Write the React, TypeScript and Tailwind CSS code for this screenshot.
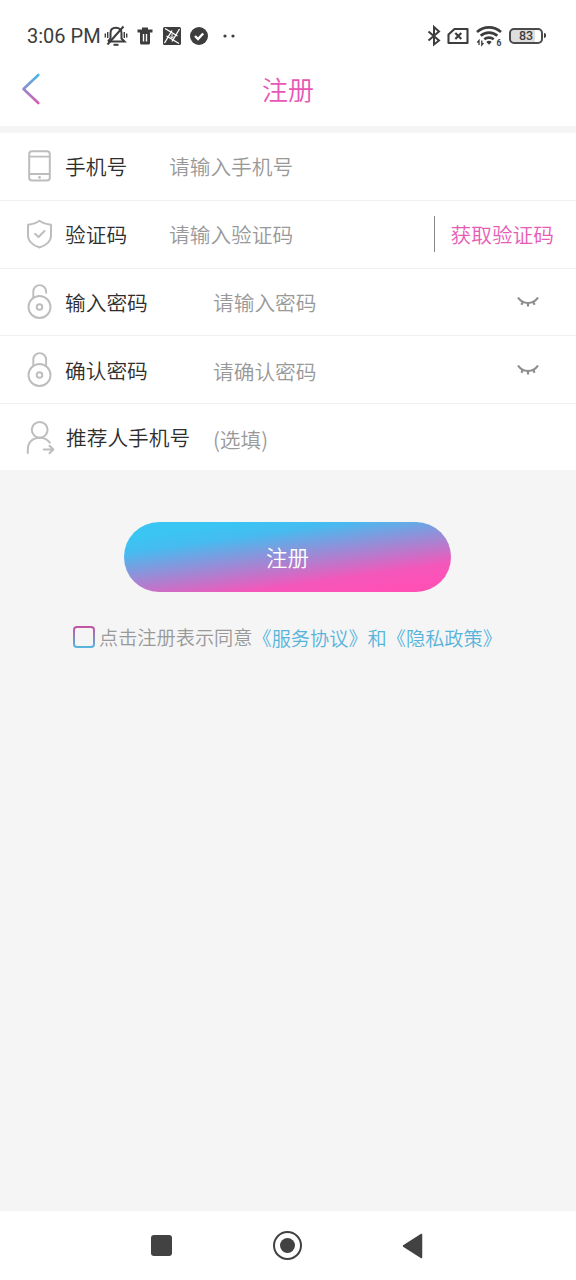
import type { ReactNode } from 'react';

interface FieldRowProps {
  icon: ReactNode;
  label: string;
  placeholder: string;
  className?: string;
  labelClassName?: string;
  placeholderClassName?: string;
  children?: ReactNode;
}

const iconProps = {
  width: 30,
  height: 40,
  viewBox: '0 0 30 40',
  fill: 'none',
  stroke: '#bdbdbd',
  strokeWidth: 2,
  strokeLinecap: 'round' as const,
  strokeLinejoin: 'round' as const,
};

function PhoneIcon() {
  return (
    <svg {...iconProps}>
      <rect x="4.2" y="5.2" width="20.6" height="29.4" rx="2.8" />
      <path d="M4.5 10.700h20M4.500 28h20" strokeWidth="1.8" />
      <circle cx="14.500" cy="31.400" r="1.400" fill="#bdbdbd" stroke="none" />
    </svg>
  );
}

function ShieldIcon() {
  return (
    <svg {...iconProps} strokeWidth="2">
      <path d="M14.500 6.800C11.500 9 7.500 10.300 3 10.800V21.500C3 27 8 31.500 14.500 33.500C21 31.500 26 27 26 21.500V10.800C21.500 10.300 17.500 9 14.500 6.800Z" />
      <path d="M10 19.800l3.500 3.200 6-6" />
    </svg>
  );
}

function LockIcon({ open = false }: { open?: boolean }) {
  return (
    <svg {...iconProps} strokeWidth="1.9">
      <circle cx="14.500" cy="25" r="11" />
      <circle cx="14.500" cy="25" r="2.800" />
      <path d={open ? 'M8.300 15.500V9.500a6.400 6.400 0 0 1 12.800 0v1.200' : 'M8.300 15.500V9.500a6.400 6.400 0 0 1 12.800 0v6'} />
    </svg>
  );
}

function ReferrerIcon() {
  return (
    <svg {...iconProps} strokeWidth="2" overflow="visible">
      <circle cx="14.700" cy="12.800" r="7.900" />
      <path d="M2.800 36V32.500C2.800 25.500 7.500 20.800 14.500 20.800c4.500 0 8 1.800 10.300 4.800" />
      <path d="M18.800 32.500h9.400M24.500 28.700l3.900 3.800-3.900 3.800" />
    </svg>
  );
}

function ClosedEyeIcon() {
  return (
    <svg width="24" height="14" viewBox="0 0 24 14" fill="none" stroke="#8c8c8c" strokeWidth="2.200">
      <path d="M2 2.500C7 9.800 17 9.800 22 2.500" />
      <path d="M12 8v3.500M6.900 6.800L5.400 9.800M17.100 6.800L18.600 9.800" />
    </svg>
  );
}

function FieldRow({
  icon,
  label,
  placeholder,
  className = '',
  labelClassName = 'w-[104px]',
  placeholderClassName = '',
  children,
}: FieldRowProps) {
  return (
    <div className={`flex items-center bg-white pl-[25px] text-[20.700px] leading-[30px] ${className}`}>
      <div className="w-[40px] shrink-0">{icon}</div>
      <label className={`shrink-0 whitespace-nowrap text-[#2e2e2e] ${labelClassName}`}>{label}</label>
      <span className={`flex-1 whitespace-nowrap text-[#999] ${placeholderClassName}`}>{placeholder}</span>
      {children}
    </div>
  );
}

function StatusBar() {
  return (
    <div className="flex h-[54px] items-center justify-between pt-[17px] pr-[30px] pl-[27px] font-normal text-[#3d3d3d]">
      <div className="flex items-center">
        <span className="w-[76px] whitespace-nowrap font-['Roboto'] text-[20px] leading-6">3:06 PM</span>
        {/* muted bell */}
        <svg width="26" height="24" viewBox="0 0 26 24" fill="none" stroke="currentColor" strokeWidth="2">
          <path d="M5 17.500h16.500l-3-3V9C18.500 6 16.500 3.800 13 3.800S7.500 6 7.500 9v5.500L5 17.500" />
          <path d="M10.500 20.800h5" />
          <path d="M4.500 20.500L20.500 2.500" />
          <path d="M2.300 9.500v4M4.700 8v6M21.300 8v6M23.700 9.500v4" strokeWidth="1.400" />
        </svg>
        <svg className="ml-[7px]" width="18" height="20" viewBox="0 0 18 20" fill="currentColor">
          <path fillRule="evenodd" d="M6 1.500h6v2h4.500v3H14V17a1.500 1.500 0 0 1-1.500 1.500h-7A1.500 1.500 0 0 1 4 17V6.500H1.500v-3H6zM6.800 8v7.500h1.400V8zM9.800 8v7.500h1.400V8z" />
        </svg>
        <svg className="ml-[8px]" width="20" height="20" viewBox="0 0 20 20">
          <rect x="1" y="1" width="18" height="18" rx="1.500" fill="currentColor" />
          <path d="M3 2.500L15.500 10M17.500 3L10 15.500M17 17.500L4.500 10M2.500 17L10 4.500" fill="none" stroke="white" strokeWidth="1.400" />
          <path d="M10 7.500v4.500M8.300 10.500l1.700 1.800 1.700-1.800" fill="none" stroke="white" strokeWidth="1" />
        </svg>
        <svg className="ml-[7px]" width="20" height="20" viewBox="0 0 20 20">
          <circle cx="10" cy="10" r="9" fill="currentColor" />
          <path d="M6 10l3 3 5.200-5.500" fill="none" stroke="white" strokeWidth="2.400" />
        </svg>
        <svg className="ml-[13px]" width="14" height="4" viewBox="0 0 14 4" fill="currentColor">
          <circle cx="3" cy="2" r="1.600" />
          <circle cx="11" cy="2" r="1.600" />
        </svg>
      </div>
      <div className="flex items-center">
        <svg width="16" height="24" viewBox="0 0 16 24" fill="none" stroke="currentColor" strokeWidth="2">
          <path d="M1.500 7.500l10.500 9L7 20.500V3l5 4.500-10.500 9" />
        </svg>
        <svg className="ml-[4px]" width="22" height="20" viewBox="0 0 22 20" fill="none" stroke="currentColor" strokeWidth="2.100" strokeLinejoin="round">
          <path d="M7.500 3H20.500v14H1.500V8.500z" />
          <path d="M8.300 7l6 6M14.300 7l-6 6" strokeWidth="2.100" />
        </svg>
        <svg className="mr-px ml-[6px]" width="28" height="24" viewBox="0 0 28 24" fill="none" stroke="currentColor" strokeWidth="2.600">
          <path d="M2 8C9 1.800 19 1.800 26 8M5.700 11.800c4.500-4.300 12.100-4.300 16.600 0M9.300 15.300c2.600-2.300 6.800-2.300 9.400 0" />
          <path d="M11.300 18a4 4 0 0 1 5.400 0L14 20.800z" fill="currentColor" stroke="none" />
          <path d="M4 21v-4.500L2.300 18.500M6.800 16.500V21l1.700-2" strokeWidth="1.300" />
          <text x="21.500" y="21.500" fill="currentColor" stroke="none" fontSize="8.500" fontFamily="Roboto" fontWeight="700">6</text>
        </svg>
        <div className="ml-[5px] flex h-[16px] w-[34px] items-center justify-center rounded-[5px] border-2 border-[#4b4b4b] bg-[linear-gradient(90deg,#dedede_80%,#fff_80%)] pt-[2px] font-['Roboto'] text-[12.500px] leading-none font-medium">
          83
        </div>
        <div className="ml-px h-[5px] w-[2px] rounded-r bg-[#3d3d3d]" />
      </div>
    </div>
  );
}

export default function App() {
  return (
    <div className="flex h-[1280px] w-[576px] flex-col bg-[#f5f5f5] font-['Noto_Sans_CJK_SC',sans-serif] font-[350]">
      <header className="h-[126px] bg-white">
        <StatusBar />
        <div className="grid h-[70px] grid-cols-[1fr_auto_1fr] items-center">
          <svg className="ml-[20px]" width="22" height="34" viewBox="0 0 22 34" fill="none">
            <defs>
              <linearGradient id="back" x1="0" y1="2" x2="0" y2="32" gradientUnits="userSpaceOnUse">
                <stop stopColor="#43bce6" />
                <stop offset="1" stopColor="#df58b0" />
              </linearGradient>
            </defs>
            <path d="M18.300 3L3.500 17l14.800 14" stroke="url(#back)" strokeWidth="2.600" strokeLinecap="round" strokeLinejoin="round" />
          </svg>
          <h1 className="text-[26px] leading-[38px] text-[#e857b5]">注册</h1>
        </div>
      </header>

      <section className="mt-[7px]">
        <FieldRow className="h-[68px] border-b border-[#f1f1f1] pb-px" icon={<PhoneIcon />} label="手机号" placeholder="请输入手机号" />
        <FieldRow className="h-[68px] border-b border-[#f1f1f1] pb-[2px]" icon={<ShieldIcon />} label="验证码" placeholder="请输入验证码">
          <button className="mr-[22px] flex h-9 items-center border-l border-[#888] pl-4 text-[#e65cb4]">获取验证码</button>
        </FieldRow>
        <FieldRow className="h-[67px] border-b border-[#f1f1f1] pr-9" labelClassName="w-[148px]" icon={<LockIcon open />} label="输入密码" placeholder="请输入密码">
          <ClosedEyeIcon />
        </FieldRow>
        <FieldRow
          className="h-[68px] border-b border-[#f1f1f1] pr-9"
          labelClassName="w-[148px]"
          placeholderClassName="pt-[2px]"
          icon={<LockIcon />}
          label="确认密码"
          placeholder="请确认密码"
        >
          <ClosedEyeIcon />
        </FieldRow>
        <FieldRow
          className="h-[66px]"
          labelClassName="w-[148px] pl-px"
          placeholderClassName="pt-[3px]"
          icon={<ReferrerIcon />}
          label="推荐人手机号"
          placeholder="(选填)"
        />
      </section>

      <button className="mt-[52px] ml-[124px] h-[70px] w-[327px] rounded-full bg-[linear-gradient(172deg,#3ac5f3_14%,#46bbf0_27%,#f457ba_75%,#ff50b6_90%)] text-[21.500px] text-white">
        注册
      </button>

      <div className="mt-[29px] flex items-center pl-[73px] text-[19.200px] leading-[30px]">
        <span className="mr-[4px] size-[22px] shrink-0 rounded-[4px] bg-[linear-gradient(#c6519f,#54b8df)] p-[2px]">
          <span className="block size-full rounded-[2px] bg-[#f5f5f5]" />
        </span>
        <span className="whitespace-nowrap text-[#999]">点击注册表示同意</span>
        <span className="pt-[2px] whitespace-nowrap text-[#56b4dc]">《服务协议》和《隐私政策》</span>
      </div>

      <nav className="mt-auto flex h-[69px] items-center bg-white pl-[151px]">
        <span className="size-[21px] rounded-[3px] bg-[#424242]" />
        <span className="ml-[101px] flex size-[29px] items-center justify-center rounded-full border-[2.500px] border-[#424242]">
          <span className="size-[15px] rounded-full bg-[#424242]" />
        </span>
        <svg className="ml-[100px]" width="21" height="26" viewBox="0 0 21 26" fill="#424242" stroke="#424242" strokeWidth="1.500" strokeLinejoin="round">
          <path d="M19.500 1.500v23L1.500 13z" />
        </svg>
      </nav>
    </div>
  );
}
